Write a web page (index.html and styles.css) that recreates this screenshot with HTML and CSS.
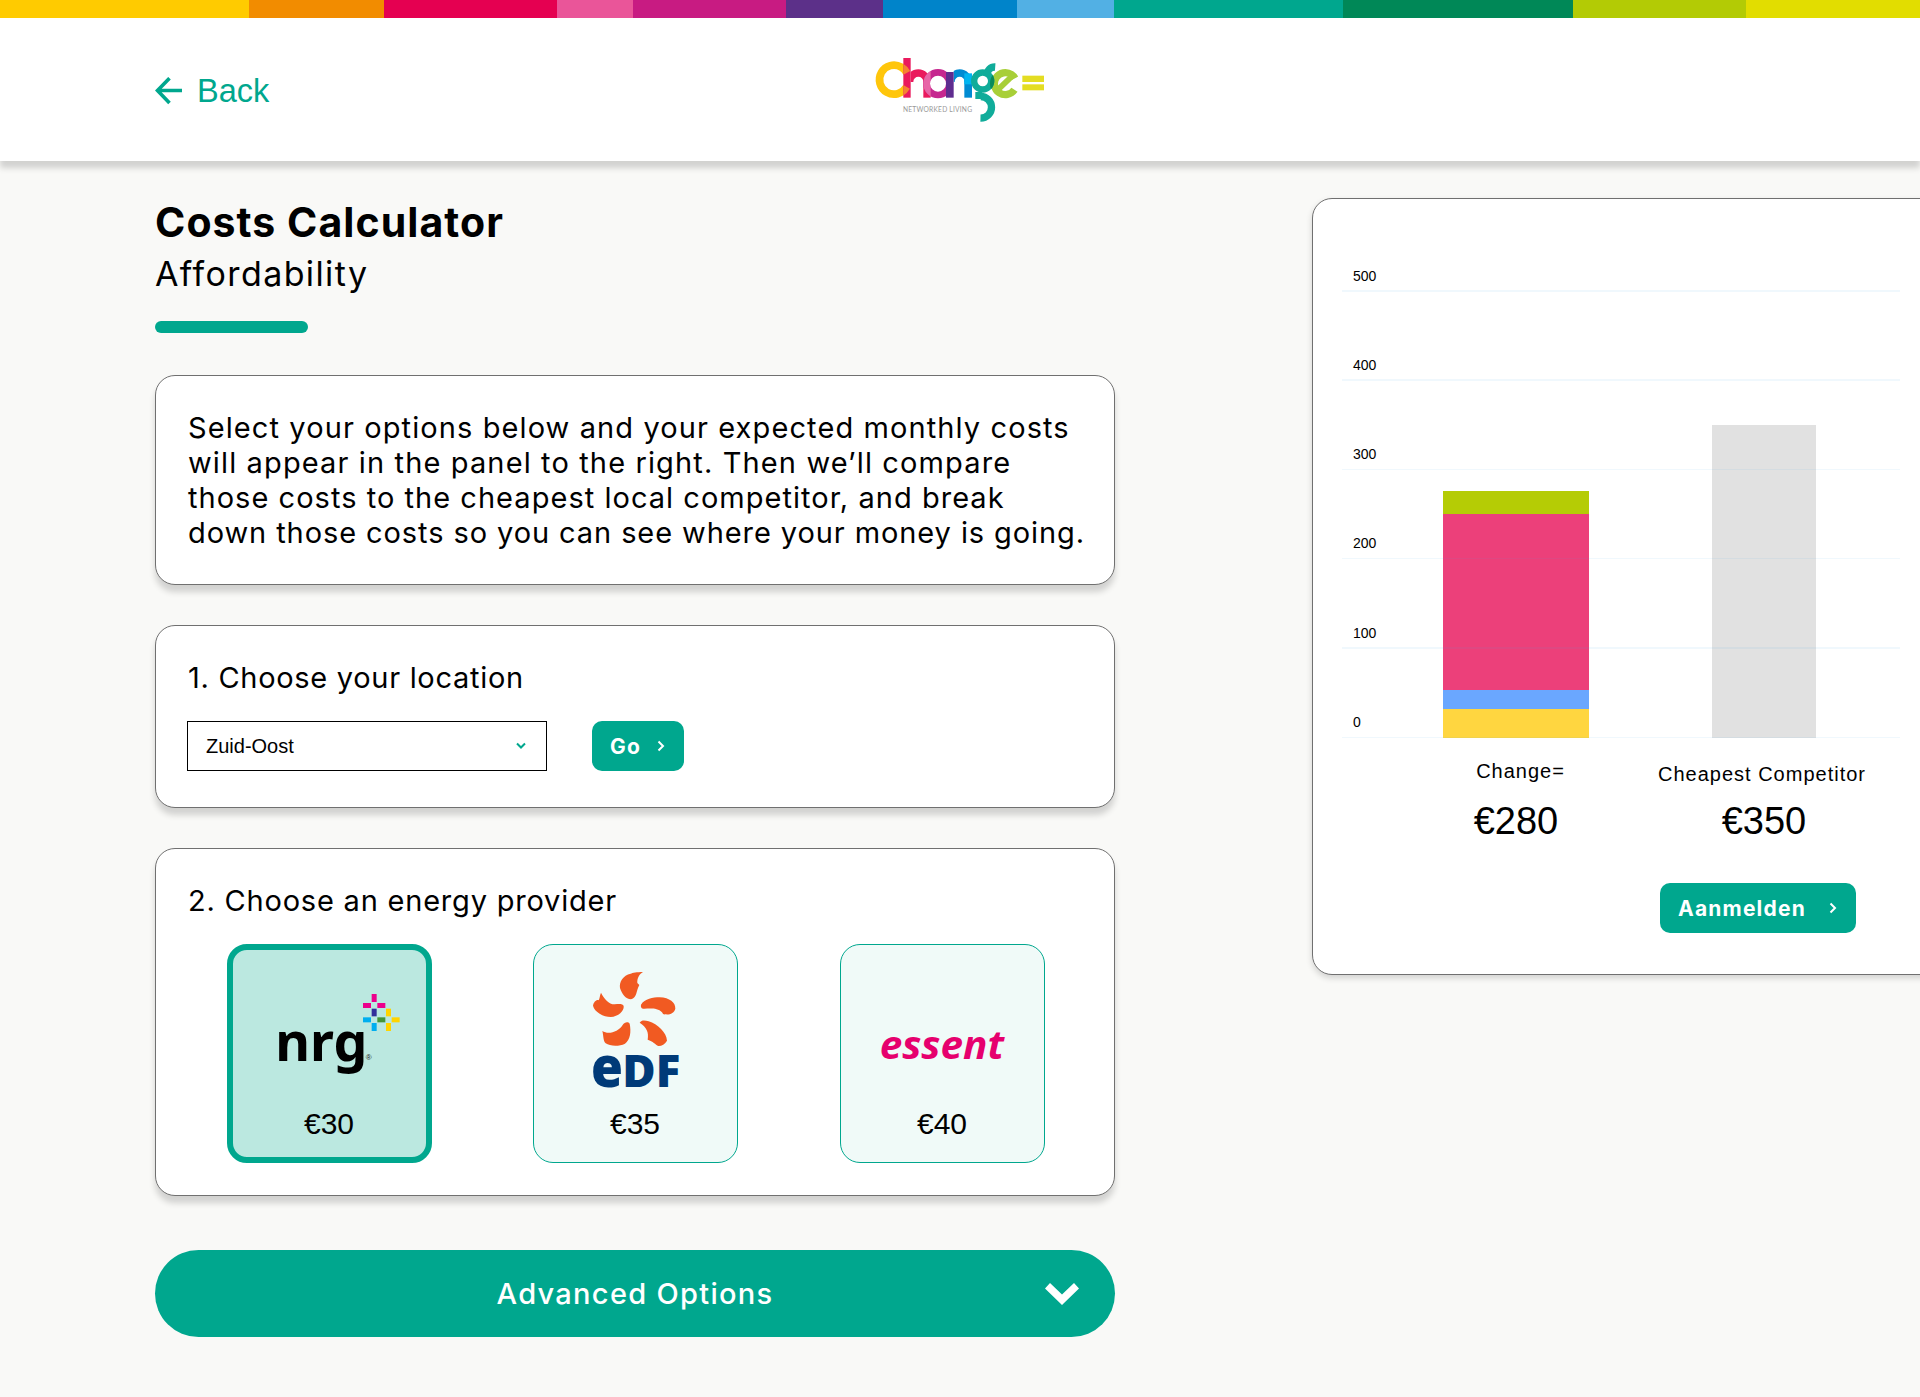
FILE: index.html
```html
<!DOCTYPE html>
<html lang="en">
<head>
<meta charset="utf-8">
<title>Costs Calculator</title>
<link rel="stylesheet" href="styles.css">
</head>
<body>
<header class="header">
  <div class="strip">
    <i class="s1"></i><i class="s2"></i><i class="s3"></i><i class="s4"></i><i class="s5"></i><i class="s6"></i><i class="s7"></i><i class="s8"></i><i class="s9"></i><i class="s10"></i><i class="s11"></i><i class="s12"></i>
  </div>
  <div class="bar">
    <a class="back">
      <svg width="28" height="28" viewBox="0 0 28 28" fill="none" stroke="#00a78e" stroke-width="3.6"><path d="M27 13.500H3M14.500 1.200L2.500 13.500l12 12.500"/></svg>
      <span>Back</span>
    </a>
    <svg class="logo" width="200" height="100" viewBox="0 0 600 300" fill="none">
      <defs>
        <clipPath id="stem"><rect x="130" y="54" width="22" height="119"/></clipPath>
        <clipPath id="arch"><rect x="152" y="80" width="70" height="46"/></clipPath>
        <clipPath id="narch"><rect x="281" y="80" width="60" height="46"/></clipPath>
        <clipPath id="left"><rect x="186" y="80" width="26" height="100"/></clipPath>
        <clipPath id="overlap"><circle cx="436" cy="131" r="46"/></clipPath>
      </defs>
      <circle cx="102" cy="119" r="43.500" stroke="#ffc60b" stroke-width="23" stroke-dasharray="227.800 45.500" transform="rotate(30 102 119)"/>
      <rect x="130" y="54" width="22" height="119" fill="#ea1a5d"/>
      <g clip-path="url(#stem)"><circle cx="102" cy="119" r="43.500" stroke="#f58233" stroke-width="23" stroke-dasharray="227.800 45.500" transform="rotate(30 102 119)"/></g>
      <g clip-path="url(#arch)"><circle cx="175" cy="125" r="26" stroke="#ea1a5d" stroke-width="22"/></g>
      <rect x="190" y="124" width="22" height="49" fill="#ea1a5d"/>
      <circle cx="234" cy="131" r="34" stroke="#c6278f" stroke-width="20" fill="#fff"/>
      <g clip-path="url(#left)"><circle cx="234" cy="131" r="34" stroke="#e765a7" stroke-width="20"/></g>
      <g clip-path="url(#narch)"><circle cx="299" cy="125" r="26" stroke="#008bd2" stroke-width="22"/></g>
      <rect x="258" y="96" width="23" height="77" fill="#5f2c8f"/>
      <rect x="313" y="120" width="23" height="53" fill="#008bd2"/>
      <rect x="313" y="100" width="23" height="33" fill="#00b5f1"/>
      <circle cx="436" cy="131" r="33" stroke="#a8cf38" stroke-width="22" stroke-dasharray="170 38" transform="rotate(34 436 131)"/>
      <line x1="414" y1="149" x2="464" y2="101" stroke="#a8cf38" stroke-width="17"/>
      <circle cx="368" cy="123" r="25.500" stroke="#10ac9a" stroke-width="19"/>
      <circle cx="404" cy="103" r="22" stroke="#10ac9a" stroke-width="22" stroke-dasharray="36 103" transform="rotate(180 404 103)"/>
      <g clip-path="url(#overlap)"><circle cx="368" cy="123" r="25.500" stroke="#088a5b" stroke-width="19"/></g>
      <rect x="346" y="156" width="20" height="21" fill="#10ac9a"/>
      <circle cx="362" cy="202" r="32.500" stroke="#10ac9a" stroke-width="22" stroke-dasharray="102.100 102.100" transform="rotate(-90 362 202)"/>
      <rect x="487" y="107" width="65" height="19" fill="#e4dd22"/>
      <rect x="487" y="133" width="65" height="18" fill="#e4dd22"/>
      <text x="129" y="215" class="tag" textLength="207">NETWORKED LIVING</text>
    </svg>
  </div>
</header>

<main class="main">
  <section class="form">
    <h1>Costs Calculator</h1>
    <h2>Affordability</h2>
    <div class="rule"></div>

    <div class="card intro">
      <p><span class="l1">Select your options below and your expected monthly costs</span><br><span class="l2">will appear in the panel to the right. Then we’ll compare</span><br><span class="l3">those costs to the cheapest local competitor, and break</span><br><span class="l4">down those costs so you can see where your money is going.</span></p>
    </div>

    <div class="card location">
      <h3 class="t1">1. Choose your location</h3>
      <div class="pick">
        <div class="select"><span>Zuid-Oost</span><svg width="12" height="8" viewBox="0 0 12 8" fill="none" stroke="#00a78e" stroke-width="2"><path d="M2 1.500l4 4 4-4"/></svg></div>
        <button class="btn go"><span>Go</span><svg width="8" height="12" viewBox="0 0 8 12" fill="none" stroke="#fff" stroke-width="2"><path d="M1.500 1.500L6 6l-4.500 4.500"/></svg></button>
      </div>
    </div>

    <div class="card energy">
      <h3 class="t2">2. Choose an energy provider</h3>
      <div class="providers">
        <div class="provider selected">
          <svg width="205" height="160" viewBox="22 12 615 480">
            <g fill="#ec008c"><rect x="456" y="162" width="15" height="24"/><rect x="430" y="189" width="24" height="15"/><rect x="473" y="189" width="24" height="15"/></g>
            <rect x="456" y="206" width="15" height="23" fill="#33309a"/>
            <g fill="#ffd400"><rect x="499" y="206" width="15" height="23"/><rect x="516" y="232" width="24" height="15"/><rect x="499" y="249" width="15" height="24"/></g>
            <g fill="#00aeef"><rect x="430" y="232" width="24" height="15"/><rect x="456" y="249" width="15" height="24"/></g>
            <rect x="473" y="232" width="24" height="15" fill="#439639"/>
            <text x="167" y="362" class="nrg" textLength="276" lengthAdjust="spacingAndGlyphs">nrg</text>
            <text x="438" y="360" class="reg">®</text>
          </svg>
          <span>€30</span>
        </div>
        <div class="provider">
          <svg width="205" height="160" viewBox="10 12 615 480">
            <g fill="#f15a22">
              <path d="M340 96C322 96 308 99 303 101C280 106 268 126 271 144C276 160 288 178 304 178C322 174 319 153 329 135L323 129C322 116 328 103 340 96Z"/>
              <path d="M214 158C210 168 210 176 207 181C201 178 192 186 190 197C194 216 222 231 243 231C266 230 284 213 282 198C279 190 267 192 255 193C237 193 223 176 214 158Z"/>
              <path d="M334 194C345 176 370 172 390 172C420 173 438 188 437 206C434 218 421 225 407 223C401 224 399 221 397 217C382 201 355 207 340 206C334 204 333 200 334 194Z"/>
              <path d="M330 248C336 239 346 241 357 244C384 252 411 278 412 302C406 313 394 319 386 318C377 313 370 304 354 299C358 276 351 262 330 248Z"/>
              <path d="M218 273C236 285 266 276 279 255C285 246 295 244 300 251C305 275 302 299 286 311C268 320 241 319 228 310C220 302 222 288 218 273Z"/>
            </g>
            <text x="184" y="442" class="edf-e" textLength="96" lengthAdjust="spacingAndGlyphs">e</text>
            <text x="278" y="442" class="edf" textLength="174" lengthAdjust="spacingAndGlyphs">DF</text>
          </svg>
          <span>€35</span>
        </div>
        <div class="provider">
          <svg width="205" height="160" viewBox="31 12 615 480">
            <text x="150" y="357" class="essent" textLength="373" lengthAdjust="spacingAndGlyphs">essent</text>
          </svg>
          <span>€40</span>
        </div>
      </div>
    </div>

    <button class="advanced"><span>Advanced Options</span><svg width="34" height="22" viewBox="0 0 34 22"><path d="M0 5.500L5 0l12 11.500L29 0l5 5.500L17 22z" fill="#fff"/></svg></button>
  </section>

  <aside class="panel">
    <div class="chart">
      <div class="bars">
        <div class="stack">
          <i class="green" style="height:23px"></i><i class="pink" style="height:176px"></i><i class="blue" style="height:19px"></i><i class="yellow" style="height:29px"></i>
        </div>
        <div class="other" style="height:313px"></div>
      </div>
      <div class="row thick">500</div>
      <div class="row thick">400</div>
      <div class="row">300</div>
      <div class="row">200</div>
      <div class="row thick">100</div>
      <div class="row">0</div>
    </div>
    <div class="totals">
      <div class="total ours"><span>Change=</span><strong>€280</strong></div>
      <div class="total theirs"><span>Cheapest Competitor</span><strong>€350</strong></div>
    </div>
    <button class="btn signup"><span>Aanmelden</span><svg width="8" height="12" viewBox="0 0 8 12" fill="none" stroke="#fff" stroke-width="2"><path d="M1.500 1.500L6 6l-4.500 4.500"/></svg></button>
  </aside>
</main>
</body>
</html>
```

FILE: styles.css
```css
* { box-sizing: border-box; }
body {
  margin: 0;
  height: 1397px;
  overflow: hidden;
  background: #f9f9f7;
  color: #000;
  font-family: Inter, "Open Sans", sans-serif;
}
h1, h2, h3, p { margin: 0; font-weight: 400; white-space: nowrap; }
button { border: 0; padding: 0; font-family: inherit; color: #fff; background: #00a78e; }
svg { display: block; flex: none; }
svg text { white-space: pre; }

.header {
  position: relative;
  height: 161px;
  background: #fff;
  box-shadow: 0 7px 6px rgba(0, 0, 0, .16);
}
.strip {
  display: grid;
  height: 18px;
  grid-template-columns: 249px 135px 173px 76px 153px 97px 134px 97px 229px 230px 173px 1fr;
}
.s1 { background: #ffcb00; }
.s2 { background: #f28c00; }
.s3 { background: #e50051; }
.s4 { background: #ea5599; }
.s5 { background: #c81b82; }
.s6 { background: #5c3089; }
.s7 { background: #0084ca; }
.s8 { background: #52b0e4; }
.s9 { background: #00a78e; }
.s10 { background: #008857; }
.s11 { background: #b3cb05; }
.s12 { background: #e2dd00; }

.bar { display: flex; padding: 22px 0 0 155px; }
.back {
  display: flex;
  align-items: center;
  gap: 14px;
  width: 705px;
  height: 102px;
  font: 32.5px/40px "Liberation Sans", Arial, sans-serif;
  color: #00a78e;
}
.tag { font: 20px Lato, sans-serif; fill: #999; }

.main { display: flex; padding: 37px 0 0 155px; }
.form { width: 960px; flex: none; }
h1 { font-size: 41px; line-height: 48px; font-weight: 700; letter-spacing: 1.05px; }
h2 { margin-top: 8px; font-size: 34px; line-height: 40px; letter-spacing: 1.4px; }
.rule { width: 153px; height: 12px; margin-top: 27px; border-radius: 6px; background: #00a78e; }

.card {
  margin-top: 40px;
  padding: 34px 32px 0;
  border: 1px solid #707070;
  border-radius: 20px;
  background: #fff;
  box-shadow: 0 7px 6px rgba(0, 0, 0, .16);
}
.intro { margin-top: 42px; height: 210px; }
.intro p { font-size: 29px; line-height: 35px; }
.l1 { letter-spacing: 1.1px; }
.l2 { letter-spacing: 1.13px; }
.l3 { letter-spacing: 1.03px; }
.l4 { letter-spacing: .91px; }
h3 { font-size: 29px; line-height: 36px; }
.t1 { letter-spacing: .7px; }
.t2 { letter-spacing: .79px; }
.location { height: 183px; }
.pick { display: flex; gap: 45px; margin: 25px 0 0 -1px; }
.select {
  display: flex;
  align-items: center;
  justify-content: space-between;
  width: 360px;
  height: 50px;
  padding: 0 19px 0 18px;
  border: 1px solid #000;
  font: 20px/24px "Liberation Sans", Arial, sans-serif;
}
.btn {
  display: flex;
  align-items: center;
  justify-content: space-between;
  height: 50px;
  padding: 0 19px 0 18px;
  border-radius: 10px;
  font-size: 21px;
  font-weight: 700;
  letter-spacing: 1.2px;
}
.btn span { padding-top: 1px; }
.go { width: 92px; }

.energy { height: 348px; }
.providers { display: flex; gap: 101px; margin: 25px 0 0 39px; }
.provider {
  width: 205px;
  height: 219px;
  display: flex;
  flex-direction: column;
  align-items: center;
  border: 1px solid #00a78e;
  border-radius: 20px;
  background: #f0faf8;
  font: 30px/40px "Liberation Sans", Arial, sans-serif;
}
.provider:last-child { margin-left: 1px; }
.provider svg { margin-top: -1px; }
.provider span { margin-right: 1px; }
.selected { border: 6px solid #00a78e; background: #bbe8e0; }
.selected svg { margin-top: -6px; }
.nrg { font: 700 163px "Noto Sans", sans-serif; }
.reg { font: 24px "Liberation Sans", sans-serif; fill: #222; }
.edf-e, .edf { font: 800 130px "Open Sans", sans-serif; fill: #003a78; }
.edf-e { font-size: 168px; }
.essent { font: italic 700 118px "Open Sans", sans-serif; fill: #e6006e; }

.advanced {
  display: grid;
  grid-template-columns: 960px;
  align-items: center;
  justify-items: center;
  width: 960px;
  height: 87px;
  margin-top: 54px;
  border-radius: 43.500px;
  font-size: 29px;
  font-weight: 500;
  letter-spacing: 1.3px;
}
.advanced > * { grid-area: 1 / 1; }
.advanced svg { justify-self: end; margin-right: 36px; }

.panel {
  flex: none;
  width: 680px;
  height: 777px;
  margin-left: 197px;
  padding: 3px 0 0 29px;
  border: 1px solid #707070;
  border-radius: 20px;
  background: #fff;
  box-shadow: 0 3px 6px rgba(0, 0, 0, .16);
}
.chart {
  position: relative;
  display: grid;
  grid-template-rows: 90px 89px 89px 89px 90px 89px;
  width: 558px;
}
.row {
  position: relative;
  display: flex;
  align-items: flex-end;
  padding: 0 0 7px 11px;
  border-bottom: 1px solid rgba(60, 160, 235, .08);
  font: 14px/16px "Liberation Sans", Arial, sans-serif;
}
.thick { border-bottom-width: 2px; padding-bottom: 6px; }
.bars {
  position: absolute;
  inset: 0;
  display: flex;
  align-items: flex-end;
  gap: 123px;
  padding-left: 101px;
}
.stack { display: flex; flex-direction: column; width: 146px; }
.other { width: 104px; background: #e1e1e1; }
.green { background: #b5cc05; }
.pink { background: #ec407a; }
.blue { background: #6aa7ff; }
.yellow { background: #ffd640; }

.totals { display: flex; padding-left: 101px; font-family: "Liberation Sans", Arial, sans-serif; }
.total { display: flex; flex-direction: column; align-items: center; white-space: nowrap; }
.total span { font-size: 20px; line-height: 24px; letter-spacing: 1px; }
.total strong { font-size: 38px; line-height: 44px; font-weight: 400; }
.ours { width: 146px; padding-top: 21px; }
.ours span { margin-left: 9px; }
.ours strong { margin-top: 16px; }
.theirs { width: 208px; margin-left: 69px; padding-top: 24px; }
.theirs strong { margin: 13px 0 0 4px; }
.signup { width: 196px; margin: 40px 0 0 318px; }
```
